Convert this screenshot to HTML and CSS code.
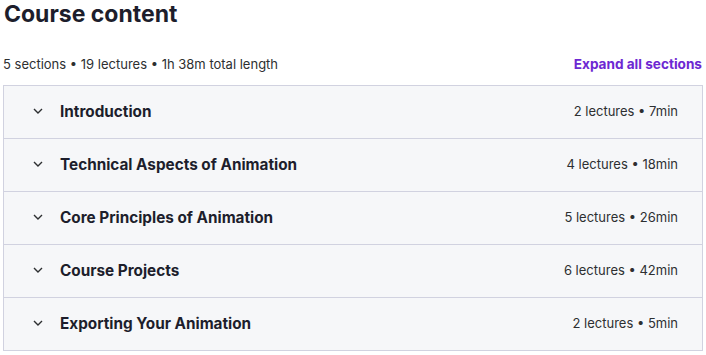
FILE: index.html
```html
<!DOCTYPE html>
<html lang="en">
<head>
    <meta charset="UTF-8">
    <meta name="viewport" content="width=device-width, initial-scale=1.0">
    <title>Course content</title>
    <link rel="stylesheet" href="styles.css">
</head>
<body>
    <div class="curriculum">
        <h2 class="title">Course content</h2>

        <div class="summary">
            <span>5 sections • 19 lectures • 1h 38m total length</span>
            <button class="expand-btn">Expand all sections</button>
        </div>

        <div class="sections">
            <div class="section">
                <svg class="chevron" viewBox="0 0 12 8"><path d="M2 2l4 4 4-4"/></svg>
                <div class="section-title">Introduction</div>
                <div class="section-meta">2 lectures • 7min</div>
            </div>
            <div class="section">
                <svg class="chevron" viewBox="0 0 12 8"><path d="M2 2l4 4 4-4"/></svg>
                <div class="section-title">Technical Aspects of Animation</div>
                <div class="section-meta">4 lectures • 18min</div>
            </div>
            <div class="section">
                <svg class="chevron" viewBox="0 0 12 8"><path d="M2 2l4 4 4-4"/></svg>
                <div class="section-title">Core Principles of Animation</div>
                <div class="section-meta">5 lectures • 26min</div>
            </div>
            <div class="section">
                <svg class="chevron" viewBox="0 0 12 8"><path d="M2 2l4 4 4-4"/></svg>
                <div class="section-title">Course Projects</div>
                <div class="section-meta">6 lectures • 42min</div>
            </div>
            <div class="section">
                <svg class="chevron" viewBox="0 0 12 8"><path d="M2 2l4 4 4-4"/></svg>
                <div class="section-title">Exporting Your Animation</div>
                <div class="section-meta">2 lectures • 5min</div>
            </div>
        </div>
    </div>
</body>
</html>
```

FILE: styles.css
```css
body {
    margin: 0;
    padding: 0 3px 0 3px;
    font-family: Inter, 'Noto Sans', Arial, sans-serif;
    color: #2d2f31;
    background-color: #fff;
}

.title {
    margin: 0;
    padding: 0 0 0 1px;
    font-size: 23px;
    font-weight: 700;
    line-height: 28px;
    color: #1d1e2c;
}

.summary {
    display: flex;
    justify-content: space-between;
    align-items: center;
    margin-top: 17px;
    height: 40px;
    padding: 0 1px 3px 0;
    box-sizing: border-box;
    font-size: 13px;
    color: #2d2f31;
}

.expand-btn {
    padding: 0;
    border: none;
    background: none;
    font-family: inherit;
    font-size: 13.6px;
    font-weight: 700;
    color: #6d28d2;
    cursor: pointer;
}

.sections {
    border: 1px solid #d1d2e0;
    border-bottom: none;
}

.section {
    display: flex;
    align-items: center;
    height: 53px;
    padding: 0 24px 2px 29px;
    box-sizing: border-box;
    background-color: #f6f7f9;
    border-bottom: 1px solid #d1d2e0;
}

.chevron {
    width: 12px;
    height: 8px;
    fill: none;
    stroke: #2d2f31;
    stroke-width: 1.4;
    margin-right: 16px;
    margin-left: -1px;
}

.section-title {
    flex: 1;
    font-size: 15.3px;
    font-weight: 700;
    color: #1d1e2c;
}

.section-meta {
    font-size: 13px;
}
```
